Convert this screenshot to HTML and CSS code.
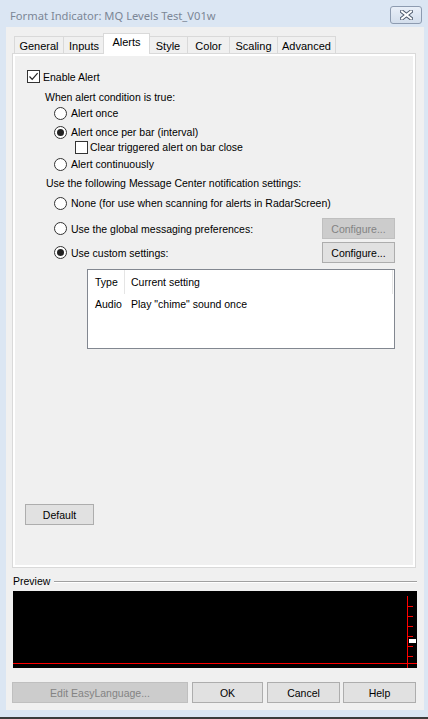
FILE: index.html
```html
<!DOCTYPE html>
<html>
<head>
<meta charset="utf-8">
<link rel="stylesheet" href="styles.css">
</head>
<body>
<div class="window">
  <div class="titlebar">
    <span class="title">Format Indicator: MQ Levels Test_V01w</span>
    <div class="close">
      <svg width="13" height="10" viewBox="0 0 13 10">
        <path d="M2 1.5 L11 8.5 M11 1.5 L2 8.5" stroke="#4d5a6c" stroke-width="4" stroke-linecap="square" fill="none"/>
        <path d="M2 1.5 L11 8.5 M11 1.5 L2 8.5" stroke="#ffffff" stroke-width="2" stroke-linecap="square" fill="none"/>
      </svg>
    </div>
  </div>
  <div class="client">
    <div class="tabs">
      <div class="tab w-general">General</div>
      <div class="tab w-inputs">Inputs</div>
      <div class="tab w-alerts selected">Alerts</div>
      <div class="tab w-style">Style</div>
      <div class="tab w-color">Color</div>
      <div class="tab w-scaling">Scaling</div>
      <div class="tab w-advanced">Advanced</div>
    </div>
    <div class="panel">
      <div class="page">
        <div class="row r-enable">
          <span class="check">
            <svg width="11" height="11" viewBox="0 0 11 11"><path d="M1.5 5.5 L4.2 8.3 L9.6 2.2" stroke="#222" stroke-width="1.2" fill="none"/></svg>
          </span>
          <span>Enable Alert</span>
        </div>
        <div class="row r-when">When alert condition is true:</div>
        <div class="row r-radio r-once"><span class="radio"></span><span>Alert once</span></div>
        <div class="row r-radio r-perbar"><span class="radio on"></span><span>Alert once per bar (interval)</span></div>
        <div class="row r-clear"><span class="check"></span><span>Clear triggered alert on bar close</span></div>
        <div class="row r-radio r-cont"><span class="radio"></span><span>Alert continuously</span></div>
        <div class="row r-use">Use the following Message Center notification settings:</div>
        <div class="row r-radio r-none"><span class="radio"></span><span>None (for use when scanning for alerts in RadarScreen)</span></div>
        <div class="row r-radio r-opt r-global">
          <span class="opt"><span class="radio"></span><span>Use the global messaging preferences:</span></span>
          <span class="btn disabled cfg">Configure...</span>
        </div>
        <div class="row r-radio r-opt r-custom">
          <span class="opt"><span class="radio on"></span><span>Use custom settings:</span></span>
          <span class="btn cfg">Configure...</span>
        </div>
        <div class="listbox">
          <div class="lhead">
            <span class="c1">Type</span>
            <span class="c2">Current setting</span>
          </div>
          <div class="lrow">
            <span class="c1">Audio</span>
            <span class="c2">Play "chime" sound once</span>
          </div>
        </div>
        <span class="btn default">Default</span>
      </div>
    </div>
    <div class="preview-label"><span>Preview</span><span class="rule"></span></div>
    <div class="preview">
      <svg width="404" height="77" viewBox="0 0 404 77">
        <rect x="0" y="0" width="404" height="77" fill="#000"/>
        <rect x="0" y="72" width="404" height="1" fill="#ff0000"/>
        <rect x="394" y="5" width="1" height="72" fill="#ff0000"/>
        <rect x="395" y="15" width="5" height="1" fill="#ff0000"/>
        <rect x="395" y="25" width="5" height="1" fill="#ff0000"/>
        <rect x="395" y="35" width="5" height="1" fill="#ff0000"/>
        <rect x="395" y="45" width="5" height="1" fill="#ff0000"/>
        <rect x="395" y="55" width="5" height="1" fill="#ff0000"/>
        <rect x="395" y="65" width="5" height="1" fill="#ff0000"/>
        <rect x="396" y="48" width="7" height="4" fill="#ffffff"/>
      </svg>
    </div>
    <div class="buttons">
      <span class="btn disabled b-edit">Edit EasyLanguage...</span>
      <span class="btn b-ok">OK</span>
      <span class="btn b-cancel">Cancel</span>
      <span class="btn b-help">Help</span>
    </div>
  </div>
  <div class="frame-bottom"></div>
</div>
</body>
</html>
```

FILE: styles.css
```css
* { box-sizing: border-box; }
html, body { margin: 0; padding: 0; }
body {
  background: #dbe6f3;
  font-family: "Liberation Sans", Arial, sans-serif;
  font-size: 10.5px;
  color: #000;
}
.window {
  width: 428px;
  height: 719px;
  background: #dbe6f3;
  display: flex;
  flex-direction: column;
}
.titlebar {
  height: 27px;
  display: flex;
  align-items: flex-start;
  justify-content: space-between;
}
.title {
  font-family: "Noto Sans", "Open Sans", sans-serif;
  font-size: 11.2px;
  color: #7b8796;
  margin-left: 10px;
  margin-top: 8px;
  line-height: 16px;
}
.close {
  width: 32px;
  height: 18px;
  margin-top: 6px;
  margin-right: 6px;
  border: 1px solid #8d9bb0;
  border-radius: 3px;
  background: linear-gradient(#e9eff8, #d3deec);
  display: flex;
  align-items: center;
  justify-content: center;
}
.client {
  height: 683px;
  margin-left: 6px;
  margin-right: 4px;
  background: #f0f0f0;
  padding: 7px 0 7px 6px;
  display: flex;
  flex-direction: column;
}
.frame-bottom {
  height: 2px;
  margin-top: 7px;
  background: #3c3c3c;
}
.tabs {
  height: 19px;
  display: flex;
  align-items: flex-end;
  padding-left: 2px;
}
.tab {
  height: 17px;
  border: 1px solid #d9d9d9;
  border-bottom: none;
  margin-right: -1px;
  background: #f0f0f0;
  display: flex;
  align-items: center;
  justify-content: center;
  padding-top: 1px;
  font-size: 11px;
}
.tab.selected {
  height: 21px;
  margin-bottom: -1px;
  background: #ffffff;
  position: relative;
  z-index: 1;
  padding-top: 0;
  padding-bottom: 4px;
  margin-left: -1px;
  margin-right: -2px;
}
.w-general { width: 50px; }
.w-inputs { width: 42px; }
.w-alerts { width: 47px; }
.w-style { width: 40px; }
.w-color { width: 43px; }
.w-scaling { width: 49px; }
.w-advanced { width: 59px; }
.panel {
  width: 404px;
  height: 515px;
  border: 1px solid #d9d9d9;
  background: #ffffff;
  padding: 2px;
}
.page {
  height: 100%;
  background: #f0f0f0;
  padding-top: 12px;
  display: flex;
  flex-direction: column;
  align-items: flex-start;
}
.row {
  display: flex;
  align-items: center;
  white-space: nowrap;
}
.check {
  width: 13px;
  height: 13px;
  border: 1px solid #333;
  background: #fff;
  display: flex;
  align-items: center;
  justify-content: center;
  flex: none;
}
.radio {
  width: 13px;
  height: 13px;
  border: 1px solid #333;
  border-radius: 50%;
  background: #fff;
  flex: none;
  display: flex;
  align-items: center;
  justify-content: center;
  margin-right: 4px;
}
.radio.on::after {
  content: "";
  width: 7px;
  height: 7px;
  border-radius: 50%;
  background: #222;
}
.r-enable { height: 17px; margin-left: 12px; gap: 3px; }
.r-when { height: 16px; margin-top: 4px; margin-left: 30px; }
.r-radio { height: 16px; margin-left: 39px; }
.r-perbar { margin-top: 3px; }
.r-clear { height: 14px; margin-left: 60px; gap: 2px; }
.r-cont { margin-top: 2px; }
.r-use { height: 16px; margin-top: 3px; margin-left: 31px; }
.r-none { margin-top: 4px; }
.r-opt {
  height: 21px;
  width: 341px;
  justify-content: space-between;
}
.r-global { margin-top: 7px; }
.r-custom { margin-top: 3px; }
.opt { display: flex; align-items: center; }
.btn {
  display: flex;
  align-items: center;
  justify-content: center;
  height: 21px;
  background: #e1e1e1;
  border: 1px solid #adadad;
  white-space: nowrap;
}
.btn.disabled {
  background: #cccccc;
  border-color: #bfbfbf;
  color: #838383;
}
.cfg { width: 73px; }
.listbox {
  margin-top: 6px;
  margin-left: 72px;
  width: 308px;
  height: 80px;
  border: 1px solid #828790;
  background: #fff;
}
.lhead {
  height: 24px;
  display: flex;
  align-items: center;
}
.lhead .c1 {
  width: 37px;
  height: 24px;
  border-right: 1px solid #e5e5e5;
  display: flex;
  align-items: center;
  padding-left: 7px;
}
.lhead .c2 {
  flex: 1;
  height: 24px;
  border-right: 1px solid #e5e5e5;
  margin-right: 1px;
  display: flex;
  align-items: center;
  padding-left: 6px;
}
.lrow {
  height: 19px;
  display: flex;
  align-items: center;
}
.lrow .c1 { width: 37px; padding-left: 7px; }
.lrow .c2 { padding-left: 6px; }
.default {
  width: 69px;
  margin-top: 155px;
  margin-left: 10px;
}
.preview-label {
  height: 14px;
  margin-top: 6px;
  display: flex;
  align-items: center;
  padding-left: 1px;
  width: 405px;
}
.preview-label .rule {
  flex: 1;
  height: 2px;
  border-top: 1px solid #a0a0a0;
  border-bottom: 1px solid #ffffff;
  margin-left: 4px;
  margin-top: 2px;
}
.preview {
  margin-top: 3px;
  margin-left: 1px;
  width: 404px;
  height: 77px;
  display: flex;
}
.buttons {
  margin-top: 14px;
  display: flex;
  gap: 4px;
}
.b-edit { width: 176px; }
.b-ok { width: 71px; }
.b-cancel { width: 73px; margin-right: -1px; }
.b-help { width: 73px; }
```
